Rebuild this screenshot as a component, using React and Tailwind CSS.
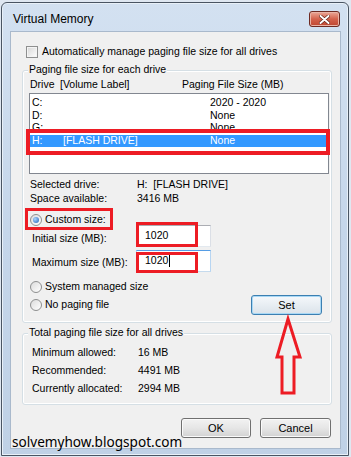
import React from "react";

const F = "font-['Liberation_Sans',Arial,sans-serif]";

function Radio({ checked }) {
  return (
    <span className="relative flex h-[12px] w-[12px] shrink-0 items-center justify-center rounded-full border border-[#8e8f8f] bg-gradient-to-br from-[#dcdcdc] to-[#ffffff]">
      {checked && (
        <span className="h-[6px] w-[6px] rounded-full bg-[radial-gradient(circle_at_35%_35%,#a9d6ff,#1f5fb6)]" />
      )}
    </span>
  );
}

function Btn({ children, focused, w }) {
  return (
    <div
      className={
        "flex h-[20px] items-center justify-center rounded-[3px] border text-[11px] text-black " +
        w +
        " " +
        (focused
          ? "border-[#3c7fb1] bg-gradient-to-b from-[#f5f8fb] to-[#dbe3ea] shadow-[inset_0_0_0_1px_#a8d8f5]"
          : "border-[#707070] bg-gradient-to-b from-[#f2f2f2] via-[#e6e6e6] to-[#d2d2d2] shadow-[inset_0_0_0_1px_#fafafa]")
      }
    >
      {children}
    </div>
  );
}

function Legend({ children }) {
  return (
    <div className="-mt-[8px] ml-[5px] flex h-[14px] items-center self-start bg-[#f0f0f0] px-[1px] text-[10.5px] text-black">
      {children}
    </div>
  );
}

export default function App() {
  const rows = [
    { d: "C:", l: "", v: "2020 - 2020" },
    { d: "D:", l: "", v: "None" },
    { d: "G:", l: "", v: "None" },
    { d: "H:", l: "[FLASH DRIVE]", v: "None", sel: true },
  ];
  return (
    <div className={"relative h-[457px] w-[351px] overflow-hidden bg-[#dfe7f1] " + F}>
      {/* window */}
      <div className="ml-[1px] mt-[2px] flex h-[454px] w-[348px] flex-col rounded-t-[6px] border border-[#4a5563] bg-gradient-to-b from-[#d3e1f1] via-[#c5d6ea] to-[#bfd1e6] shadow-[inset_0_0_0_1px_#e8f0f8]">
        {/* title bar */}
        <div className="flex h-[28px] shrink-0 items-start justify-between pl-[11px] pr-[8px]">
          <div className="mt-[8px] text-[12px] leading-[16px] text-black">Virtual Memory</div>
          <div className="mt-[8px] flex h-[16px] w-[31px] items-center justify-center rounded-[3px] border border-[#6e2a22] bg-gradient-to-b from-[#eaa898] via-[#d4624c] to-[#bf4630] shadow-[inset_0_0_0_1px_#eab4a6]">
            <svg width="11" height="9" viewBox="0 0 11 9">
              <path d="M1.5 1 L9.5 8 M9.5 1 L1.5 8" stroke="#5a1a10" strokeWidth="3.2" strokeLinecap="round" />
              <path d="M1.5 1 L9.5 8 M9.5 1 L1.5 8" stroke="#ffffff" strokeWidth="2" strokeLinecap="round" />
            </svg>
          </div>
        </div>

        {/* content */}
        <div className="ml-[8px] flex h-[418px] w-[331px] flex-col border border-[#a9b9cc] bg-[#f0f0f0] text-[10.5px] text-black">
          {/* auto checkbox */}
          <div className="ml-[15px] mt-[14px] flex h-[12px] items-center gap-[4px]">
            <span className="h-[12px] w-[12px] shrink-0 border border-[#8e8f8f] bg-gradient-to-br from-[#d6d6d6] to-[#ffffff] shadow-[inset_0_0_0_1px_#f4f4f4]" />
            <span>Automatically manage paging file size for all drives</span>
          </div>

          {/* group 1 */}
          <div className="ml-[11px] mt-[12px] flex h-[253px] w-[310px] flex-col rounded-[3px] border border-[#d5dfe5] shadow-[inset_0_0_0_1px_#ffffff]">
            <Legend>Paging file size for each drive</Legend>
            <div className="mt-[2px] flex h-[12px] items-center pl-[7px]">
              <span className="w-[30px]">Drive</span>
              <span className="w-[122px]">[Volume Label]</span>
              <span>Paging File Size (MB)</span>
            </div>
            <div className="ml-[6px] mt-[2px] h-[81px] w-[300px] border border-[#828790] bg-white pt-[2.5px]">
              {rows.map((r) => (
                <div
                  key={r.d}
                  className={
                    "mr-[2px] flex h-[12.7px] items-center pl-[2px] " +
                    (r.sel ? "bg-[#3399ff] text-white" : "")
                  }
                >
                  <span className="w-[31px]">{r.d}</span>
                  <span className="w-[147px]">{r.l}</span>
                  <span>{r.v}</span>
                </div>
              ))}
            </div>

            <div className="mt-[4px] flex h-[14px] items-center pl-[7px]">
              <span className="w-[107px]">Selected drive:</span>
              <span>H:&nbsp;&nbsp;[FLASH DRIVE]</span>
            </div>
            <div className="flex h-[14px] items-center pl-[7px]">
              <span className="w-[107px]">Space available:</span>
              <span>3416 MB</span>
            </div>

            <div className="mt-[8px] flex h-[12px] items-center gap-[3px] pl-[7px]">
              <Radio checked />
              <span>Custom size:</span>
            </div>

            <div className="-mt-[1px] flex h-[22px] items-start pl-[9px]">
              <span className="w-[104px] pt-[7px] leading-[12px]">Initial size (MB):</span>
              <div className="flex h-[22px] w-[75px] items-center border border-[#abadb3] border-b-[#e3e9ef] border-l-[#e2e3ea] border-r-[#dbdfe6] bg-white pl-[8px]">
                1020
              </div>
            </div>
            <div className="mt-[3px] flex h-[22px] items-start pl-[9px]">
              <span className="w-[104px] pt-[6px] leading-[12px]">Maximum size (MB):</span>
              <div className="flex h-[22px] w-[75px] items-center border border-[#569de5] border-b-[#c5daed] border-l-[#b7d5f2] border-r-[#b7d5f2] bg-white pl-[8px]">
                1020<span className="ml-[1px] h-[12px] w-[1px] bg-black" />
              </div>
            </div>

            <div className="mt-[8px] flex h-[14px] items-center gap-[3px] pl-[7px]">
              <Radio />
              <span>System managed size</span>
            </div>
            <div className="mt-[1px] flex h-[20px] items-center justify-between pl-[7px] pr-[9px]">
              <div className="flex items-center gap-[3px]">
                <Radio />
                <span>No paging file</span>
              </div>
              <Btn focused w="w-[71px]">Set</Btn>
            </div>
          </div>

          {/* group 2 */}
          <div className="ml-[11px] mt-[10px] flex h-[72px] w-[310px] flex-col rounded-[3px] border border-[#d5dfe5] shadow-[inset_0_0_0_1px_#ffffff]">
            <Legend>Total paging file size for all drives</Legend>
            <div className="mt-[4px] flex flex-col pl-[9px]">
              <div className="flex h-[18px] items-center">
                <span className="w-[106px]">Minimum allowed:</span>
                <span>16 MB</span>
              </div>
              <div className="flex h-[18px] items-center">
                <span className="w-[106px]">Recommended:</span>
                <span>4491 MB</span>
              </div>
              <div className="flex h-[18px] items-center">
                <span className="w-[106px]">Currently allocated:</span>
                <span>2994 MB</span>
              </div>
            </div>
          </div>

          {/* buttons */}
          <div className="mt-[13px] flex justify-end gap-[9px] pr-[9px]">
            <Btn w="w-[70px]">OK</Btn>
            <Btn w="w-[71px]">Cancel</Btn>
          </div>
        </div>
      </div>

      {/* annotations */}
      <div className="absolute left-[26px] top-[129px] h-[26px] w-[304px] border-[4px] border-[#ed1c24]" />
      <div className="absolute left-[25px] top-[208px] h-[22px] w-[88px] border-[3px] border-[#ed1c24]" />
      <div className="absolute left-[136px] top-[222px] h-[25px] w-[62px] border-[3px] border-[#ed1c24]" />
      <div className="absolute left-[136px] top-[252px] h-[21px] w-[62px] border-[3px] border-[#ed1c24]" />
      <svg className="absolute left-0 top-0" width="351" height="457" viewBox="0 0 351 457">
        <path
          d="M288 319 L300 357 L294 357 L294 393 L282 393 L282 357 L277 357 Z"
          fill="none"
          stroke="#ed1c24"
          strokeWidth="3"
          strokeLinejoin="miter"
        />
      </svg>
      <div className="absolute left-[12px] top-[433px] font-['Noto_Sans',sans-serif] text-[13.6px] leading-[18px] text-black">
        solvemyhow.blogspot.com
      </div>
    </div>
  );
}
